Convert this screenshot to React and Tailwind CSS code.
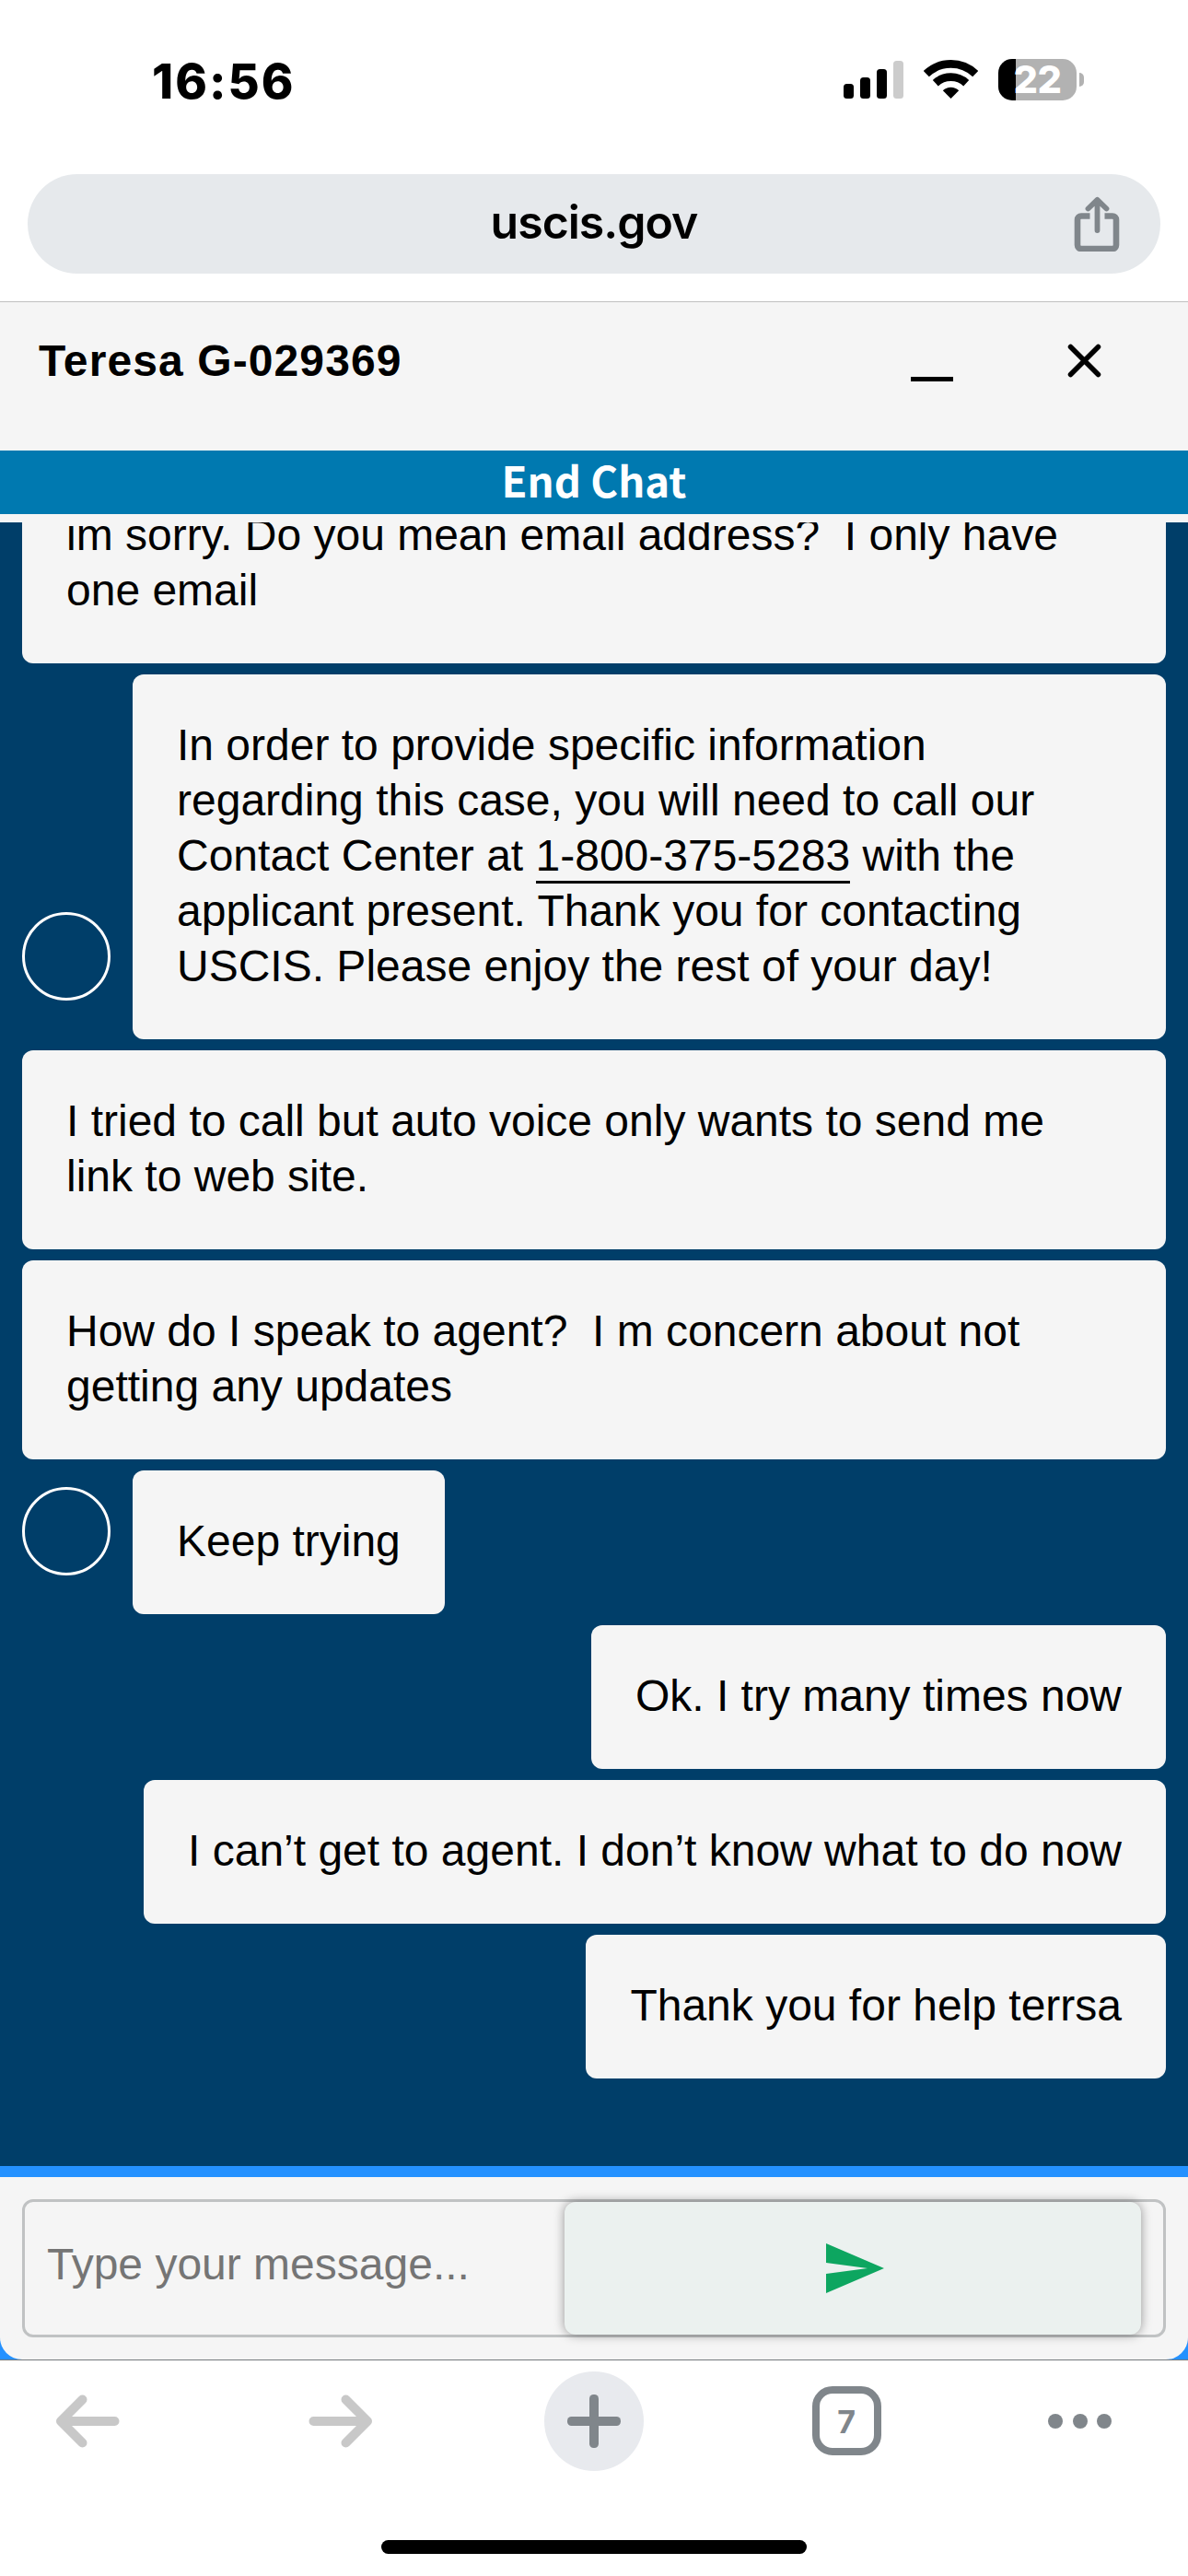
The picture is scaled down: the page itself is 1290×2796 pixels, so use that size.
import { clsx } from "clsx";

const messages = [
  { id: 1, from: "user", wide: true, text: "im sorry. Do you mean email address?  I only have one email" },
  {
    id: 2,
    from: "agent",
    text: "In order to provide specific information regarding this case, you will need to call our Contact Center at ",
    phone: "1-800-375-5283",
    rest: " with the applicant present. Thank you for contacting USCIS. Please enjoy the rest of your day!",
  },
  { id: 3, from: "user", wide: true, text: "I tried to call but auto voice only wants to send me link to web site." },
  { id: 4, from: "user", wide: true, text: "How do I speak to agent?  I m concern about not getting any updates" },
  { id: 5, from: "agent", text: "Keep trying" },
  { id: 6, from: "user", text: "Ok. I try many times now" },
  { id: 7, from: "user", text: "I can’t get to agent. I don’t know what to do now" },
  { id: 8, from: "user", text: "Thank you for help terrsa" },
];

const StatusBar = () => (
  <div className="flex h-[189px] items-start justify-between pt-[64px] pr-[113px] pl-[165px] font-['Inter',sans-serif]">
    <span className="text-[52.5px] leading-[49px] font-extrabold tracking-[2px]">16:56</span>
    <div className="flex items-start">
      <svg width="65" height="45" viewBox="0 0 65 45">
        <rect x="0" y="27" width="11" height="16" rx="3.5" />
        <rect x="18" y="20" width="11" height="23" rx="3.5" />
        <rect x="36" y="11" width="11" height="32" rx="3.5" />
        <rect x="54" y="2" width="11" height="41" rx="3.5" fill="#cccccc" />
      </svg>
      <svg className="ml-[22px]" width="59" height="45" viewBox="0 0 59 45">
        <g fill="none" stroke="#000" strokeWidth="8.8">
          <path d="M2.8 16.2A38.5 38.5 0 0 1 56.2 16.2" />
          <path d="M12.8 26.2A24.7 24.7 0 0 1 46.2 26.2" />
        </g>
        <path d="M29.5 43 20.8 34.2A12.5 12.5 0 0 1 38.2 34.2Z" />
      </svg>
      <div className="ml-[22px] flex items-center gap-[3px]">
        <div className="flex h-[45px] w-[85px] items-center justify-center rounded-[15px] bg-[linear-gradient(90deg,#000_19px,#b2b2b2_19px)] text-[41.5px] leading-[45px] font-extrabold tracking-[-0.5px] text-white">
          22
        </div>
        <div className="h-[15px] w-[5px] rounded-r-full bg-[#b2b2b2]" />
      </div>
    </div>
  </div>
);

const AddressBar = () => (
  <div className="h-[139px] border-b border-[#c0c0c0] px-[30px]">
    <div className="grid h-[108px] grid-cols-[1fr_auto_1fr] items-center rounded-full bg-[#e6e9ec] pr-[43px]">
      <span />
      <span className="-mr-[43px] pb-[4px] font-['Inter',sans-serif] text-[50px] leading-[60px] font-semibold tracking-[-1px]">
        uscis.gov
      </span>
      <svg
        className="justify-self-end"
        width="52"
        height="60"
        viewBox="0 0 52 60"
        fill="none"
        stroke="#80868b"
        strokeWidth="6.6"
      >
        <path d="M18.5 21.5H9a4 4 0 0 0-4 4V53a4 4 0 0 0 4 4H43a4 4 0 0 0 4-4V25.5a4 4 0 0 0-4-4H34.5" />
        <path d="M26.5 37V5M16.5 13.5 26.5 3.8 36.5 13.5" strokeLinecap="round" strokeLinejoin="round" strokeWidth="5.8" />
      </svg>
    </div>
  </div>
);

const ChatHeader = () => (
  <header className="flex h-[161px] items-start justify-between bg-[#f5f5f5] pt-[33px] pr-[94px] pl-[42px]">
    <h1 className="pt-px text-5xl leading-[60px] font-bold tracking-[1.1px]">Teresa G-029369</h1>
    <div className="flex items-start">
      <span className="mt-[48px] h-[5px] w-[46px] bg-black" />
      <svg
        className="mt-[12px] ml-[124px]"
        width="37"
        height="37"
        viewBox="0 0 37 37"
        stroke="#000"
        strokeWidth="5.5"
        strokeLinecap="round"
      >
        <path d="M3.5 3.5 33.5 33.5M33.5 3.5 3.5 33.5" />
      </svg>
    </div>
  </header>
);

const Message = ({ message }) => {
  const isAgent = message.from === "agent";
  return (
    <div className={clsx("flex shrink-0 items-end", isAgent ? "gap-6" : "justify-end")}>
      {isAgent && <div className="mb-[42px] size-24 shrink-0 rounded-full border-[3px] border-white" />}
      <p
        className={clsx(
          "rounded-xl bg-[#f5f5f5] px-12 pt-[47px] pb-[49px] text-5xl leading-[60px] whitespace-pre-wrap",
          message.wide && "w-full"
        )}
      >
        {message.text}
        {message.phone && <span className="border-b-[3px] border-black pb-px">{message.phone}</span>}
        {message.rest}
      </p>
    </div>
  );
};

const Composer = () => (
  <div className="bg-[#2491ff] pt-3">
    <div className="h-[198px] rounded-b-3xl bg-[#f5f5f5] px-6 pt-6">
      <div className="flex h-[150px] items-center justify-between rounded-xl border-[3px] border-[#c0c2c3] px-6">
        <span className="pb-[9px] text-5xl leading-[60px] text-[#757575]">Type your message...</span>
        <button className="flex h-[144px] w-[626px] items-center justify-center rounded-xl bg-[#ebf1ef] shadow-[0_0_12px_rgba(0,0,0,0.4)]">
          <svg className="ml-[5px]" width="63" height="54" viewBox="0 0 63 54" fill="#0da660">
            <path d="M0 0 63 27 0 54V33L45 27 0 21Z" />
          </svg>
        </button>
      </div>
    </div>
  </div>
);

const Toolbar = () => (
  <nav className="flex h-[235px] flex-col items-center justify-between border-t border-[#757a7e] bg-white pb-6">
    <div className="flex h-[131px] w-full items-center justify-between pr-[83px] pl-[60px]">
      <svg width="70" height="60" viewBox="0 0 70 60" fill="none" stroke="#c8c8c8" strokeWidth="10" strokeLinecap="round" strokeLinejoin="round">
        <path d="M64.5 30H7M29.5 6.5 6 30 29.5 53.5" />
      </svg>
      <svg className="ml-[22px]" width="70" height="60" viewBox="0 0 70 60" fill="none" stroke="#c8c8c8" strokeWidth="10" strokeLinecap="round" strokeLinejoin="round">
        <path d="M5.5 30H63M40.5 6.5 64 30 40.5 53.5" />
      </svg>
      <div className="-mr-[2px] ml-[2px] flex size-[108px] items-center justify-center rounded-full bg-[#e8eaee]">
        <svg width="58" height="58" viewBox="0 0 58 58" fill="#80868b">
          <rect x="0" y="24" width="58" height="10" rx="4.5" />
          <rect x="24" y="0" width="10" height="58" rx="4.5" />
        </svg>
      </div>
      <div className="-mr-[2px] ml-[2px] flex size-[75px] items-center justify-center rounded-[22px] border-[8px] border-[#80868b] pt-[3px] font-['Inter',sans-serif] text-[34px] leading-none font-bold text-[#80868b]">
        7
      </div>
      <div className="flex gap-[10.5px]">
        <span className="size-4 rounded-full bg-[#80868b]" />
        <span className="size-4 rounded-full bg-[#80868b]" />
        <span className="size-4 rounded-full bg-[#80868b]" />
      </div>
    </div>
    <div className="h-[15px] w-[462px] rounded-full bg-black" />
  </nav>
);

export default function App() {
  return (
    <div className="flex h-[2796px] w-[1290px] flex-col overflow-hidden bg-white font-['Liberation_Sans',Arial,sans-serif] text-black">
      <StatusBar />
      <AddressBar />
      <ChatHeader />
      <button className="flex h-[69px] items-center justify-center bg-[#0079b0] pb-[8px] font-['Noto_Sans_CJK_JP',sans-serif] text-[45.5px] leading-[60px] font-bold text-white">
        End Chat
      </button>
      <div className="h-[9px] bg-[#f5f5f5]" />
      {/* Scrolled to the latest message, so the oldest one is cut off at the top */}
      <main className="flex min-h-0 flex-1 flex-col justify-end gap-3 overflow-hidden bg-[#003e69] px-6 pb-[95px]">
        {messages.map((message) => (
          <Message key={message.id} message={message} />
        ))}
      </main>
      <Composer />
      <Toolbar />
    </div>
  );
}
